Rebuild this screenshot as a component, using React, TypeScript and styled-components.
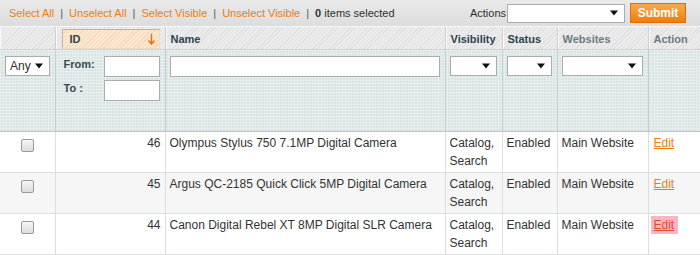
import React from "react";
import styled, { createGlobalStyle } from "styled-components";

const GlobalStyle = createGlobalStyle`
  html, body { margin: 0; padding: 0; background: #fff; }
  body {
    font-family: "Liberation Sans", Arial, Helvetica, sans-serif;
    font-size: 12px;
    color: #2f2f2f;
  }
`;

const Grid = styled.div`
  width: 700px;
`;

const MassBar = styled.div`
  display: flex;
  align-items: center;
  justify-content: space-between;
  height: 26px;
  padding: 0 14px 0 9px;
  background: linear-gradient(#eaeaea, #dddddd);
  border-bottom: 1px solid #f6f6f6;
  font-size: 11px;
`;

const LinkGroup = styled.div`
  display: flex;
  align-items: center;
  gap: 6px;
`;

const BarLink = styled.a`
  color: #ea7d12;
  text-decoration: none;
  cursor: pointer;
`;

const Sep = styled.span`
  color: #4c5a61;
`;

const Count = styled.span`
  color: #2f2f2f;
  b { font-weight: bold; }
`;

const ActionGroup = styled.div`
  display: flex;
  align-items: center;
`;

const ActionsLabel = styled.span`
  color: #2f2f2f;
  margin-right: 1px;
`;

const FakeSelect = styled.div<{ $w: number; $h: number }>`
  display: flex;
  align-items: center;
  justify-content: space-between;
  box-sizing: border-box;
  width: ${(p) => p.$w}px;
  height: ${(p) => p.$h}px;
  padding: 0 6px 0 4px;
  background: #fff;
  border: 1px solid #acacac;
  font-size: 12px;
  color: #2f2f2f;
`;

const FullSelect = styled(FakeSelect)`
  width: 100%;
`;

const SubmitButton = styled.button`
  margin-left: 5px;
  width: 56px;
  height: 20px;
  padding: 0;
  border: 1px solid #e56c00;
  background: linear-gradient(#f9a94f, #f17d0c);
  color: #fff;
  font-family: inherit;
  font-weight: bold;
  font-size: 12px;
  cursor: pointer;
`;

const Table = styled.table`
  width: 700px;
  border-collapse: collapse;
  table-layout: fixed;
`;

const HeadRow = styled.tr`
  background: repeating-linear-gradient(135deg, #ececec 0 2px, #e0e0e0 2px 3px);
`;

const HeadCell = styled.th<{ $muted?: boolean }>`
  height: 20px;
  padding: 2px 5px 0 5px;
  text-align: left;
  vertical-align: top;
  font-size: 11px;
  font-weight: bold;
  line-height: 20px;
  color: ${(p) => (p.$muted ? "#6c7a81" : "#2d444f")};
  border-right: 1px solid #d1cfcf;
  border-bottom: 1px solid #d1cfcf;
  box-shadow: inset 1px 0 0 #f9f9f9;
  &:last-child { border-right: none; }
`;

const SortBox = styled.span`
  display: flex;
  align-items: center;
  justify-content: space-between;
  box-sizing: border-box;
  height: 20px;
  margin-left: 1px;
  padding: 0 4px 0 7px;
  border: 1px solid;
  border-color: #c7b39d #efdcc6 #efdcc6 #c7b39d;
  background: repeating-linear-gradient(135deg, #fde9d3 0 2px, #f8d8b4 2px 3px);
`;

const FilterRow = styled.tr`
  background-color: #d9e4e5;
  background-image:
    linear-gradient(90deg, rgba(255, 255, 255, 0.28) 1px, transparent 1px),
    linear-gradient(rgba(255, 255, 255, 0.28) 1px, transparent 1px);
  background-size: 3px 3px;
`;

const FilterCell = styled.th<{ $pl?: number }>`
  height: 75px;
  padding: 6px 5px 0 ${(p) => p.$pl ?? 4}px;
  vertical-align: top;
  text-align: left;
  font-weight: normal;
  border-right: 1px solid #c3cecf;
  border-bottom: 1px solid #bcc6c7;
  &:last-child { border-right: none; }
`;

const Range = styled.div`
  display: flex;
  flex-direction: column;
  gap: 3px;
`;

const RangeLine = styled.div`
  display: flex;
  align-items: flex-start;
`;

const RangeLabel = styled.span`
  box-sizing: border-box;
  width: 44px;
  padding: 1px 0 0 3px;
  line-height: 14px;
  font-size: 11px;
  font-weight: bold;
  color: #3b4a51;
`;

const TextInput = styled.input<{ $w?: number }>`
  box-sizing: border-box;
  width: ${(p) => (p.$w ? `${p.$w}px` : "100%")};
  height: 21px;
  margin: 0;
  padding: 0 3px;
  border: 1px solid #acacac;
  background: #fff;
  font-family: inherit;
  font-size: 12px;
  outline: none;
`;

const DataRow = styled.tr<{ $even?: boolean }>`
  background: ${(p) => (p.$even ? "#f6f6f6" : "#fff")};
`;

const DataCell = styled.td<{ $align?: "left" | "right" | "center" }>`
  padding: 2px 4px;
  line-height: 18px;
  height: 36px;
  vertical-align: top;
  text-align: ${(p) => p.$align ?? "left"};
  border-right: 1px solid #dadfe0;
  border-bottom: 1px solid #dadfe0;
  color: #333;
  &:last-child { border-right: none; }
`;

const CheckBox = styled.input`
  appearance: none;
  -webkit-appearance: none;
  display: inline-block;
  box-sizing: border-box;
  width: 13px;
  height: 13px;
  margin: 5px 0 0 0;
  border: 1px solid #9a9a9a;
  border-radius: 2px;
  background: linear-gradient(#f6f6f6, #dcdcdc);
  vertical-align: top;
`;

const EditLink = styled.a<{ $active?: boolean }>`
  display: inline-block;
  line-height: 18px;
  padding: 0 4px 0 3px;
  margin-left: -2px;
  color: ${(p) => (p.$active ? "#e2492a" : "#ea7d12")};
  background: ${(p) => (p.$active ? "#f8b5c6" : "transparent")};
  text-decoration: underline;
  cursor: pointer;
`;

const Arrow = () => (
  <svg width="8" height="6" viewBox="0 0 8 6" aria-hidden="true">
    <path d="M0 0.5 H8 L4 5.5 Z" fill="#111" />
  </svg>
);

const SortArrow = () => (
  <svg width="7" height="11" viewBox="0 0 7 11" aria-hidden="true">
    <path d="M3.5 0 V9.5" stroke="#ec6d07" strokeWidth="1.4" fill="none" />
    <path d="M0.5 6.5 L3.5 10 L6.5 6.5" stroke="#ec6d07" strokeWidth="1.4" fill="none" />
  </svg>
);

type Product = { id: number; name: string; active?: boolean };

const products: Product[] = [
  { id: 46, name: "Olympus Stylus 750 7.1MP Digital Camera" },
  { id: 45, name: "Argus QC-2185 Quick Click 5MP Digital Camera" },
  { id: 44, name: "Canon Digital Rebel XT 8MP Digital SLR Camera", active: true },
];

export default function App() {
  return (
    <>
      <GlobalStyle />
      <Grid>
        <MassBar>
          <LinkGroup>
            <BarLink>Select All</BarLink>
            <Sep>|</Sep>
            <BarLink>Unselect All</BarLink>
            <Sep>|</Sep>
            <BarLink>Select Visible</BarLink>
            <Sep>|</Sep>
            <BarLink>Unselect Visible</BarLink>
            <Sep>|</Sep>
            <Count>
              <b>0</b> items selected
            </Count>
          </LinkGroup>
          <ActionGroup>
            <ActionsLabel>Actions</ActionsLabel>
            <FakeSelect $w={118} $h={19}>
              <span />
              <Arrow />
            </FakeSelect>
            <SubmitButton>Submit</SubmitButton>
          </ActionGroup>
        </MassBar>
        <Table>
          <colgroup>
            <col style={{ width: 55 }} />
            <col style={{ width: 110 }} />
            <col style={{ width: 280 }} />
            <col style={{ width: 57 }} />
            <col style={{ width: 55 }} />
            <col style={{ width: 91 }} />
            <col style={{ width: 52 }} />
          </colgroup>
          <thead>
            <HeadRow>
              <HeadCell />
              <HeadCell>
                <SortBox>
                  <span>ID</span>
                  <SortArrow />
                </SortBox>
              </HeadCell>
              <HeadCell>Name</HeadCell>
              <HeadCell>Visibility</HeadCell>
              <HeadCell>Status</HeadCell>
              <HeadCell $muted>Websites</HeadCell>
              <HeadCell $muted>Action</HeadCell>
            </HeadRow>
            <FilterRow>
              <FilterCell $pl={5}>
                <FullSelect $w={45} $h={20}>
                  <span>Any</span>
                  <Arrow />
                </FullSelect>
              </FilterCell>
              <FilterCell $pl={5}>
                <Range>
                  <RangeLine>
                    <RangeLabel>From:</RangeLabel>
                    <TextInput $w={56} />
                  </RangeLine>
                  <RangeLine>
                    <RangeLabel>To :</RangeLabel>
                    <TextInput $w={56} />
                  </RangeLine>
                </Range>
              </FilterCell>
              <FilterCell>
                <TextInput />
              </FilterCell>
              <FilterCell>
                <FullSelect $w={48} $h={20}>
                  <span />
                  <Arrow />
                </FullSelect>
              </FilterCell>
              <FilterCell>
                <FullSelect $w={46} $h={20}>
                  <span />
                  <Arrow />
                </FullSelect>
              </FilterCell>
              <FilterCell>
                <FullSelect $w={82} $h={20}>
                  <span />
                  <Arrow />
                </FullSelect>
              </FilterCell>
              <FilterCell />
            </FilterRow>
          </thead>
          <tbody>
            {products.map((p, i) => (
              <DataRow key={p.id} $even={i % 2 === 1}>
                <DataCell $align="center">
                  <CheckBox type="checkbox" />
                </DataCell>
                <DataCell $align="right">{p.id}</DataCell>
                <DataCell>{p.name}</DataCell>
                <DataCell>Catalog, Search</DataCell>
                <DataCell>Enabled</DataCell>
                <DataCell>Main Website</DataCell>
                <DataCell>
                  <EditLink $active={p.active}>Edit</EditLink>
                </DataCell>
              </DataRow>
            ))}
          </tbody>
        </Table>
      </Grid>
    </>
  );
}
